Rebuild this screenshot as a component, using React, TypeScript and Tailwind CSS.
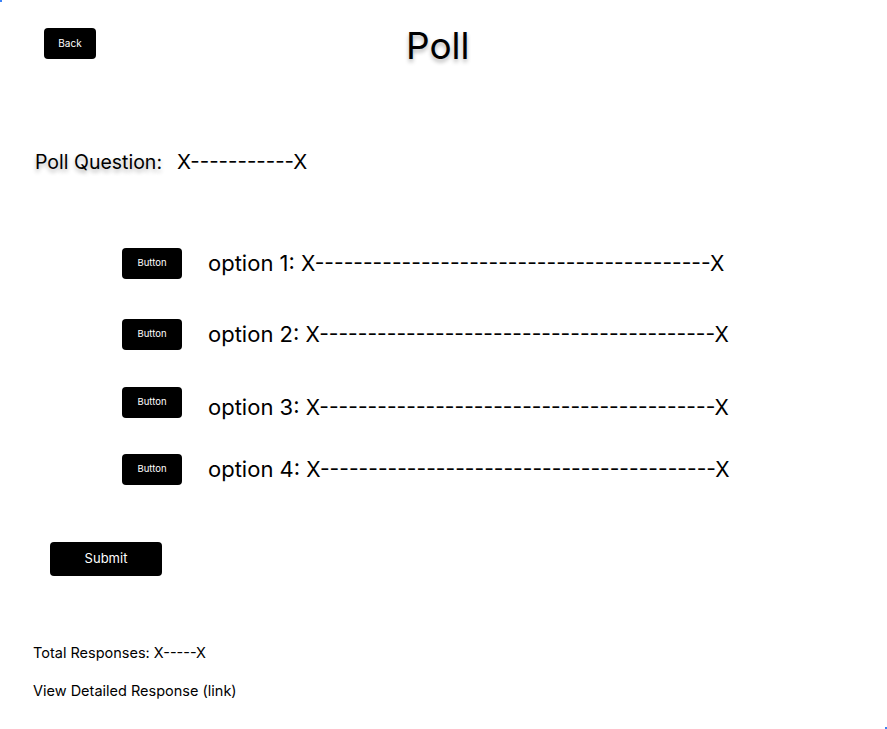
import React from "react";

const dashes = (n: number) => "-".repeat(n);

function SmallButton() {
  return (
    <button className="shrink-0 w-[60px] h-[31px] rounded-[4px] bg-black text-white text-[9.5px] flex items-center justify-center">
      Button
    </button>
  );
}

const rowClasses = [
  "flex items-center h-[31px]",
  "flex items-center h-[31px] mt-[40px]",
  "flex items-center h-[31px] mt-[37px]",
  "flex items-center h-[31px] mt-[36px]",
];

const textClasses = [
  "ml-[26px] text-[22px] leading-[26px] whitespace-nowrap",
  "ml-[26px] text-[22px] leading-[26px] whitespace-nowrap",
  "ml-[26px] text-[22px] leading-[26px] whitespace-nowrap mt-[9px]",
  "ml-[26px] text-[22px] leading-[26px] whitespace-nowrap",
];

export default function App() {
  const labels = ["option 1:", "option 2:", "option 3:", "option 4:"];
  return (
    <div
      className="relative w-[887px] h-[729px] bg-white text-black overflow-hidden"
      style={{ fontFamily: "Inter, 'Noto Sans', sans-serif" }}
    >
      <div className="absolute left-0 top-0 w-[2px] h-[2px] bg-[#3b82f6]" />
      <div className="absolute right-0 bottom-0 w-[2px] h-[2px] bg-[#3b82f6]" />

      <div className="flex items-start pt-[28px] pl-[44px]">
        <button className="w-[52px] h-[31px] rounded-[4px] bg-black text-white text-[10px] flex items-center justify-center">
          Back
        </button>
        <h1 className="ml-[310px] mt-[-4px] text-[37px] leading-[44px] [text-shadow:0_3px_4px_rgba(0,0,0,0.3)]">
          Poll
        </h1>
      </div>

      <div className="flex items-center pl-[35px] mt-[83px] leading-[22px] whitespace-nowrap">
        <span className="text-[19.5px] [text-shadow:0_3px_4px_rgba(0,0,0,0.3)]">Poll Question:</span>
        <span className="ml-[15px] text-[20.5px]">X{dashes(11)}X</span>
      </div>

      <div className="flex flex-col pl-[122px] mt-[75px]">
        {labels.map((label, i) => (
          <div key={i} className={rowClasses[i]}>
            <SmallButton />
            <span className={textClasses[i]}>
              {label} <span className="text-[21px]">X{dashes(41)}X</span>
            </span>
          </div>
        ))}
      </div>

      <div className="pl-[50px] mt-[57px]">
        <button className="w-[112px] h-[34px] rounded-[4px] bg-black text-white text-[13px] flex items-center justify-center">
          Submit
        </button>
      </div>

      <div className="pl-[33px] mt-[68px] text-[14.5px] leading-[18px] whitespace-nowrap">
        Total Responses: X{dashes(5)}X
      </div>
      <div className="pl-[33px] mt-[20px] text-[14.5px] leading-[18px] whitespace-nowrap">
        View Detailed Response (link)
      </div>
    </div>
  );
}
